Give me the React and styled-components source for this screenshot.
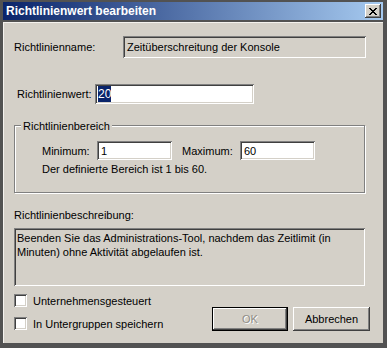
import React from "react";
import styled, { createGlobalStyle } from "styled-components";

const GlobalStyle = createGlobalStyle`
  html, body {
    margin: 0;
    padding: 0;
    background: #525252;
  }
  body {
    font-family: "Liberation Sans", Arial, sans-serif;
    font-size: 11px;
    color: #000;
  }
`;

// classic 3D edges
const sunken = `
  box-shadow: inset 1px 1px #808080, inset -1px -1px #ffffff,
    inset 2px 2px #404040, inset -2px -2px #d4d0c8;
`;
const raised = `
  box-shadow: inset -1px -1px #404040, inset 1px 1px #ffffff,
    inset -2px -2px #808080, inset 2px 2px #d4d0c8;
`;

const Window = styled.div`
  width: 387px;
  height: 348px;
  box-sizing: border-box;
  padding: 2px 4px 5px 3px;
  background: #525252;
  display: flex;
  flex-direction: column;
`;

const TitleBar = styled.div`
  height: 18px;
  flex: none;
  display: flex;
  align-items: center;
  justify-content: space-between;
  padding: 0 2px 0 3px;
  background: linear-gradient(to right, #0a246a, #a6caf0);
`;

const Title = styled.span`
  font-weight: bold;
  font-size: 12px;
  color: #fff;
`;

const CloseButton = styled.button`
  width: 16px;
  height: 14px;
  padding: 0;
  margin: 0;
  border: none;
  background: #d4d0c8;
  ${raised}
  display: flex;
  align-items: center;
  justify-content: center;
`;

const Body = styled.div`
  flex: 1;
  margin-top: 2px;
  background: #d4d0c8;
  box-shadow: inset 1px 1px #f4f2ee;
  padding: 14px 17px 0 11px;
  display: flex;
  flex-direction: column;
`;

const Row = styled.div`
  display: flex;
  align-items: center;
  height: ${(p) => p.$h || 20}px;
  margin-top: ${(p) => p.$mt || 0}px;
`;

const Label = styled.span`
  width: ${(p) => (p.$w ? `${p.$w}px` : "auto")};
  padding-left: ${(p) => p.$pl || 0}px;
  flex: none;
  box-sizing: border-box;
  white-space: nowrap;
`;

const Field = styled.div`
  box-sizing: border-box;
  height: ${(p) => p.$h || 20}px;
  width: ${(p) => (p.$w ? `${p.$w}px` : "auto")};
  flex: ${(p) => (p.$w ? "none" : 1)};
  background: ${(p) => (p.$readOnly ? "#d4d0c8" : "#ffffff")};
  ${sunken}
  padding: 0 4px;
  display: flex;
  align-items: center;
  font-size: ${(p) => p.$fs || 11}px;
`;

const Selected = styled.span`
  background: #0a246a;
  color: #fff;
  margin-left: -1px;
  padding: 1px 0;
`;

const Group = styled.div`
  position: relative;
  margin: 21px 1px 0 0;
  height: 68px;
  box-sizing: border-box;
  border: 1px solid #808080;
  box-shadow: inset 1px 1px #ffffff, 1px 1px #ffffff;
  padding: 15px 0 0 27px;
`;

const Legend = styled.span`
  position: absolute;
  top: -7px;
  left: 6px;
  padding: 0 2px;
  line-height: 14px;
  background: #d4d0c8;
`;

const RangeRow = styled.div`
  display: flex;
  align-items: center;
  height: 19px;
`;

const Note = styled.div`
  line-height: 14px;
  margin-top: 2px;
`;

const SectionLabel = styled.div`
  line-height: 14px;
  margin-top: 15px;
`;

const DescBox = styled.div`
  box-sizing: border-box;
  margin: 6px 1px 0 0;
  height: 58px;
  ${sunken}
  padding: 3px 12px 0 3px;
  line-height: 14px;
`;

const Footer = styled.div`
  display: flex;
  justify-content: space-between;
  align-items: flex-end;
  margin: 6px -4px 0 0;
`;

const Checks = styled.div`
  display: flex;
  flex-direction: column;
  gap: 6px;
`;

const CheckRow = styled.label`
  display: flex;
  align-items: center;
  height: 17px;
  gap: 6px;
`;

const Box = styled.span`
  width: 13px;
  height: 13px;
  box-sizing: border-box;
  background: #fff;
  ${sunken}
`;

const Buttons = styled.div`
  display: flex;
  gap: 5px;
  margin-bottom: 1px;
`;

const Button = styled.button`
  width: ${(p) => p.$w}px;
  height: 24px;
  box-sizing: border-box;
  margin: 0;
  padding: 0;
  font-family: "Liberation Sans", Arial, sans-serif;
  font-size: 11px;
  background: #d4d0c8;
  color: ${(p) => (p.disabled ? "#8f8c86" : "#000")};
  text-shadow: ${(p) => (p.disabled ? "1px 1px #ffffff" : "none")};
  border: ${(p) => (p.$default ? "1px solid #000" : "none")};
  ${raised}
`;

const CloseGlyph = () => (
  <svg width="8" height="7" viewBox="0 0 8 7" shapeRendering="crispEdges">
    <path
      fill="#000"
      d="M0 0h2v1H0zM6 0h2v1H6zM1 1h2v1H1zM5 1h2v1H5zM2 2h4v1H2zM3 3h2v1H3zM2 4h4v1H2zM1 5h2v1H1zM5 5h2v1H5zM0 6h2v1H0zM6 6h2v1H6z"
    />
  </svg>
);

export default function App() {
  return (
    <>
      <GlobalStyle />
      <Window>
        <TitleBar>
          <Title>Richtlinienwert bearbeiten</Title>
          <CloseButton aria-label="Schließen">
            <CloseGlyph />
          </CloseButton>
        </TitleBar>
        <Body>
          <Row $h={22}>
            <Label $w={109} $pl={0}>
              Richtlinienname:
            </Label>
            <Field $h={22} $readOnly>
              Zeitüberschreitung der Konsole
            </Field>
          </Row>

          <Row $h={20} $mt={26}>
            <Label $w={81} $pl={3}>
              Richtlinienwert:
            </Label>
            <Field $h={20} $w={159} $fs={12}>
              <Selected>20</Selected>
            </Field>
          </Row>

          <Group>
            <Legend>Richtlinienbereich</Legend>
            <RangeRow>
              <Label $w={55}>Minimum:</Label>
              <Field $h={19} $w={75}>
                1
              </Field>
              <Label $w={68} $pl={10}>
                Maximum:
              </Label>
              <Field $h={19} $w={75}>
                60
              </Field>
            </RangeRow>
            <Note>Der definierte Bereich ist 1 bis 60.</Note>
          </Group>

          <SectionLabel>Richtlinienbeschreibung:</SectionLabel>
          <DescBox>
            Beenden Sie das Administrations-Tool, nachdem das Zeitlimit (in
            Minuten) ohne Aktivität abgelaufen ist.
          </DescBox>

          <Footer>
            <Checks>
              <CheckRow>
                <Box />
                Unternehmensgesteuert
              </CheckRow>
              <CheckRow>
                <Box />
                In Untergruppen speichern
              </CheckRow>
            </Checks>
            <Buttons>
              <Button $w={76} $default disabled>
                OK
              </Button>
              <Button $w={77}>Abbrechen</Button>
            </Buttons>
          </Footer>
        </Body>
      </Window>
    </>
  );
}
